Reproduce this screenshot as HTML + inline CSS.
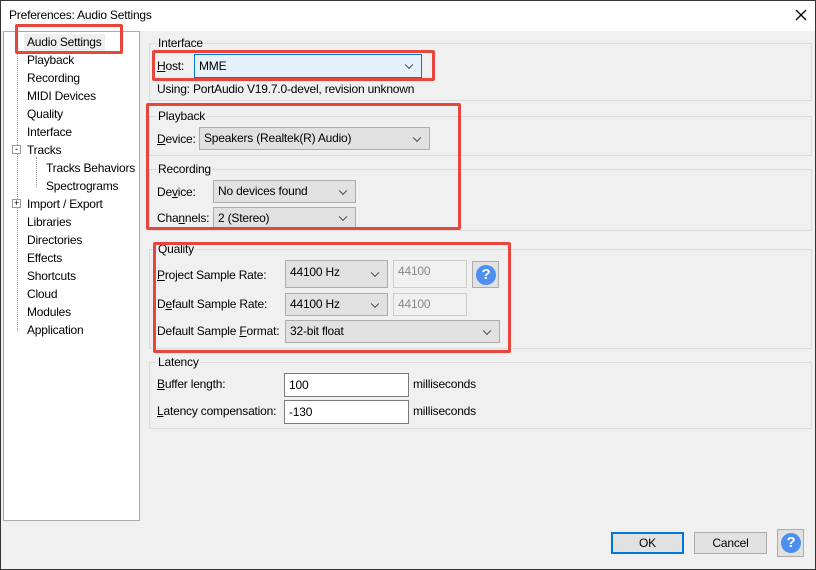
<!DOCTYPE html>
<html><head><style>
*{box-sizing:border-box;margin:0;padding:0}
body{width:816px;height:570px;overflow:hidden;background:#f0f0f0;font-family:"Liberation Sans",sans-serif;font-size:12px;color:#000;position:relative;letter-spacing:-0.2px}
.a{position:absolute;white-space:nowrap}
.win{position:absolute;left:0;top:0;width:816px;height:570px;border:1px solid #333}
.title{position:absolute;left:1px;top:1px;width:814px;height:30px;background:#fff}
.tree{position:absolute;left:3px;top:31px;width:137px;height:490px;background:#fff;border:1px solid #aaa}
.grp{position:absolute;border:1px solid #dcdcdc}
.lbl{position:absolute;background:#f0f0f0;padding:0 1px}
.combo{position:absolute;background:#e1e1e1;border:1px solid #adadad;padding-left:4px}
.combo:after{content:"";position:absolute;right:9px;top:50%;width:5px;height:5px;border-right:1px solid #444;border-bottom:1px solid #444;transform:translateY(-70%) rotate(45deg)}
.field{position:absolute;background:#fff;border:1px solid #7a7a7a;padding-left:4px}
.dis{position:absolute;background:#f0f0f0;border:1px solid #ccc;color:#888;padding-left:4px}
.red{position:absolute;border:3px solid #e8453c;border-radius:2px}
.btn{position:absolute;background:#e1e1e1;border:1px solid #adadad;text-align:center}
.help{position:absolute;background:#e1e1e1;border:1px solid #adadad}
.help i{position:absolute;left:3px;top:3px;width:20px;height:20px;border-radius:50%;background:#4d8ff0;color:#fff;font-style:normal;font-weight:bold;font-size:15px;text-align:center;line-height:20px}
u{text-decoration:underline}
.dot{position:absolute;border-left:1px dotted #999}
</style></head><body>
<div class="win"></div>
<div class="title"></div>
<div class="a" style="left:9px;top:8px">Preferences: Audio Settings</div>
<svg class="a" style="left:795px;top:9px" width="12" height="12"><path d="M1 1L11 11M11 1L1 11" stroke="#000" stroke-width="1.3"/></svg>
<div class="tree"></div>
<div class="dot" style="left:17px;top:36px;height:295px"></div>
<div class="dot" style="left:36px;top:157px;height:30px"></div>
<div class="a" style="left:24px;top:34px;width:81px;height:17px;background:#eee"></div>
<div class="a" style="left:27px;top:35px;line-height:14px">Audio Settings</div>
<div class="a" style="left:27px;top:53px">Playback</div>
<div class="a" style="left:27px;top:71px">Recording</div>
<div class="a" style="left:27px;top:89px">MIDI Devices</div>
<div class="a" style="left:27px;top:107px">Quality</div>
<div class="a" style="left:27px;top:125px">Interface</div>
<div class="a" style="left:12px;top:145px;width:9px;height:9px;border:1px solid #999;background:#fff;font-size:9px;line-height:6px;text-align:center">-</div>
<div class="a" style="left:27px;top:143px">Tracks</div>
<div class="a" style="left:46px;top:161px">Tracks Behaviors</div>
<div class="a" style="left:46px;top:179px">Spectrograms</div>
<div class="a" style="left:12px;top:199px;width:9px;height:9px;border:1px solid #999;background:#fff;font-size:9px;line-height:7px;text-align:center">+</div>
<div class="a" style="left:27px;top:197px">Import / Export</div>
<div class="a" style="left:27px;top:215px">Libraries</div>
<div class="a" style="left:27px;top:233px">Directories</div>
<div class="a" style="left:27px;top:251px">Effects</div>
<div class="a" style="left:27px;top:269px">Shortcuts</div>
<div class="a" style="left:27px;top:287px">Cloud</div>
<div class="a" style="left:27px;top:305px">Modules</div>
<div class="a" style="left:27px;top:323px">Application</div>
<div class="red" style="left:15px;top:24px;width:108px;height:30px"></div>

<div class="grp" style="left:149px;top:43px;width:663px;height:58px"></div>
<div class="lbl a" style="left:157px;top:36px">Interface</div>
<div class="a" style="left:157px;top:59px"><u>H</u>ost:</div>
<div class="combo" style="left:194px;top:54px;width:228px;height:24px;background:#e5f1fb;border-color:#0078d7;line-height:22px">MME</div>
<div class="a" style="left:157px;top:82px">Using: PortAudio V19.7.0-devel, revision unknown</div>
<div class="red" style="left:152px;top:50px;width:283px;height:31px"></div>

<div class="grp" style="left:149px;top:116px;width:663px;height:40px"></div>
<div class="lbl a" style="left:157px;top:109px">Playback</div>
<div class="a" style="left:157px;top:132px"><u>D</u>evice:</div>
<div class="combo" style="left:199px;top:127px;width:231px;height:23px;line-height:21px">Speakers (Realtek(R) Audio)</div>
<div class="grp" style="left:149px;top:169px;width:663px;height:62px"></div>
<div class="lbl a" style="left:157px;top:162px">Recording</div>
<div class="a" style="left:157px;top:185px">De<u>v</u>ice:</div>
<div class="combo" style="left:213px;top:180px;width:143px;height:23px;line-height:21px">No devices found</div>
<div class="a" style="left:157px;top:211px">Cha<u>n</u>nels:</div>
<div class="combo" style="left:213px;top:207px;width:143px;height:22px;line-height:20px">2 (Stereo)</div>
<div class="red" style="left:146px;top:103px;width:315px;height:127px"></div>

<div class="grp" style="left:149px;top:249px;width:663px;height:100px"></div>
<div class="lbl a" style="left:157px;top:242px">Quality</div>
<div class="a" style="left:157px;top:268px"><u>P</u>roject Sample Rate:</div>
<div class="combo" style="left:285px;top:260px;width:103px;height:28px;line-height:22px">44100 Hz</div>
<div class="dis" style="left:393px;top:260px;width:74px;height:28px;line-height:20px">44100</div>
<div class="help" style="left:472px;top:261px;width:27px;height:27px"><i>?</i></div>
<div class="a" style="left:157px;top:297px">D<u>e</u>fault Sample Rate:</div>
<div class="combo" style="left:285px;top:293px;width:103px;height:23px;line-height:21px">44100 Hz</div>
<div class="dis" style="left:393px;top:293px;width:74px;height:23px;line-height:20px">44100</div>
<div class="a" style="left:157px;top:324px">Default Sample <u>F</u>ormat:</div>
<div class="combo" style="left:285px;top:320px;width:215px;height:23px;line-height:21px">32-bit float</div>
<div class="red" style="left:153px;top:242px;width:358px;height:111px"></div>

<div class="grp" style="left:149px;top:362px;width:663px;height:67px"></div>
<div class="lbl a" style="left:157px;top:355px">Latency</div>
<div class="a" style="left:157px;top:377px"><u>B</u>uffer length:</div>
<div class="field" style="left:284px;top:373px;width:125px;height:24px;line-height:22px">100</div>
<div class="a" style="left:413px;top:377px">milliseconds</div>
<div class="a" style="left:157px;top:404px"><u>L</u>atency compensation:</div>
<div class="field" style="left:284px;top:400px;width:125px;height:24px;line-height:22px">-130</div>
<div class="a" style="left:413px;top:404px">milliseconds</div>

<div class="btn" style="left:611px;top:532px;width:73px;height:22px;border:2px solid #0078d7;line-height:18px">OK</div>
<div class="btn" style="left:694px;top:532px;width:73px;height:22px;line-height:20px">Cancel</div>
<div class="help" style="left:777px;top:529px;width:27px;height:28px"><i>?</i></div>
</body></html>
